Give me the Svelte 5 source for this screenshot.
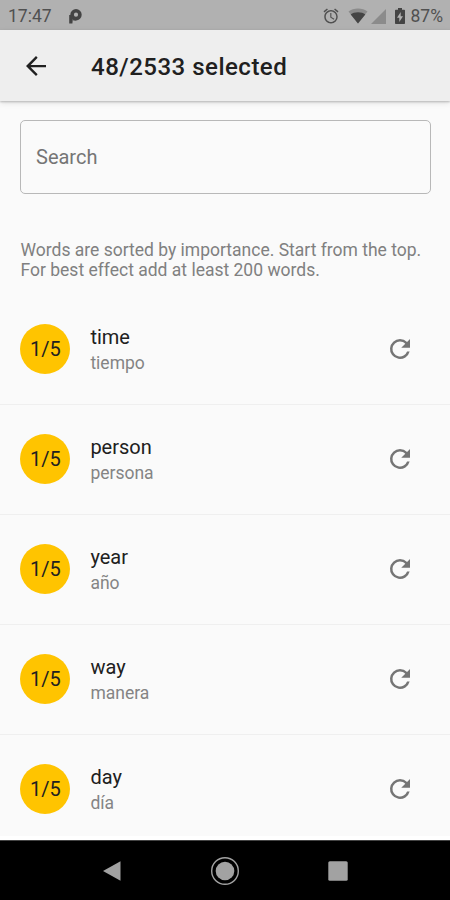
<script>
    const words = [
        { word: "time", translation: "tiempo" },
        { word: "person", translation: "persona" },
        { word: "year", translation: "año" },
        { word: "way", translation: "manera" },
        { word: "day", translation: "día" },
    ];

    let search = $state("");
</script>

<div class="screen">
    <div class="status-bar">
        <span class="clock">17:47</span>
        <svg class="parking" viewBox="0 0 13 15">
            <circle cx="7" cy="5.700" r="3.900" fill="none" stroke="currentColor" stroke-width="3.600" />
            <path d="M.2 6h3.600v4.200l-.4 4.400H.2zM4.200 8h3v3.500h-3z" />
        </svg>
        <div class="status-icons">
            <svg class="alarm" viewBox="0 0 24 24">
                <path
                    d="M22 5.720l-4.600-3.860-1.290 1.530 4.600 3.860L22 5.720zM7.880 3.390L6.600 1.860 2 5.710l1.290 1.530 4.590-3.850zM12.500 8H11v6l4.750 2.850.75-1.230-4-2.370V8zM12 4c-4.970 0-9 4.030-9 9s4.020 9 9 9a9 9 0 0 0 0-18zm0 16c-3.870 0-7-3.130-7-7s3.130-7 7-7 7 3.130 7 7-3.130 7-7 7z"
                />
            </svg>
            <svg class="wifi" viewBox="0 0 20 16">
                <path opacity="0.35" d="M10 15.500L.5 3.600C3 1.700 6.300.6 10 .6s7 1.100 9.500 3z" />
                <path d="M10 15.500L2.700 6.400C4.500 5 7 4.200 10 4.200s5.500.8 7.300 2.200z" />
            </svg>
            <svg class="signal" viewBox="0 0 15 15">
                <path d="M15 0v15H0z" />
            </svg>
            <svg class="battery" viewBox="0 0 10 16">
                <path
                    fill-rule="evenodd"
                    d="M3 0h4v1.700h2.200q.8 0 .8.800v12.700q0 .8-.8.800H.8q-.8 0-.8-.8V2.500q0-.8.8-.8H3zM5.700 4L2 9.700h2.300V14L8 8.200H5.700z"
                />
            </svg>
            <span>87%</span>
        </div>
    </div>

    <header>
        <button class="back" aria-label="Back">
            <svg viewBox="0 0 24 24">
                <path d="M20 11.100H7.730l5.590-5.690L12 4l-8 8 8 8 1.320-1.410-5.590-5.690H20v-1.800z" />
            </svg>
        </button>
        <h1>48/2533 selected</h1>
    </header>

    <main>
        <input type="text" placeholder="Search" bind:value={search} />
        <p class="hint">
            Words are sorted by importance. Start from the top.<br />
            For best effect add at least 200 words.
        </p>

        <ul>
            {#each words as item}
                <li>
                    <div class="level">1/5</div>
                    <div class="labels">
                        <span class="word">{item.word}</span>
                        <span class="translation">{item.translation}</span>
                    </div>
                    <button class="reset" aria-label="Reset {item.word}">
                        <svg viewBox="0 0 24 24">
                            <path
                                d="M17.650 6.350A7.958 7.958 0 0 0 12 4a8 8 0 1 0 7.730 10h-2.080A6 6 0 1 1 12 6c1.660 0 3.140.69 4.220 1.780L13 11h7V4l-2.350 2.350z"
                            />
                        </svg>
                    </button>
                </li>
            {/each}
        </ul>
    </main>

    <nav>
        <svg viewBox="0 0 30 30">
            <path d="M6 15L23.500 5.200v19.600z" />
        </svg>
        <svg viewBox="0 0 30 30">
            <circle cx="15" cy="15" r="13.300" fill="none" stroke="#a2a2a2" stroke-width="1.400" />
            <circle cx="15" cy="15" r="9.300" />
        </svg>
        <svg viewBox="0 0 30 30">
            <rect x="5.300" y="5.300" width="19.400" height="19.400" rx="1.500" />
        </svg>
    </nav>
</div>

<style>
    .screen {
        display: flex;
        flex-direction: column;
        width: 450px;
        height: 900px;
        overflow: hidden;
        background: #fafafa;
        font-family: Roboto, sans-serif;
        color: #202020;
    }

    svg {
        display: block;
        flex: none;
        fill: currentColor;
    }

    button {
        padding: 0;
        border: none;
        background: none;
        color: inherit;
    }

    .status-bar {
        display: flex;
        align-items: center;
        flex: none;
        height: 30px;
        padding: 2px 7px 0 8px;
        box-sizing: border-box;
        background: #b1b1b1;
        color: #505050;
        font-size: 17.5px;
    }

    .clock {
        width: 60.5px;
    }

    .parking {
        width: 13px;
        height: 15px;
        color: #444444;
    }

    .status-icons {
        display: flex;
        align-items: center;
        margin-left: auto;
    }

    .alarm {
        width: 18px;
        height: 18px;
        margin-right: 8px;
    }

    .wifi {
        width: 20px;
        height: 16px;
        margin-right: 3px;
        color: #444444;
    }

    .signal {
        width: 15px;
        height: 15px;
        margin-right: 9px;
        color: #8b8b8b;
    }

    .battery {
        width: 10px;
        height: 16px;
        margin-right: 6px;
        color: #444444;
    }

    header {
        display: flex;
        align-items: center;
        flex: none;
        height: 71px;
        padding-left: 20.5px;
        box-sizing: border-box;
        background: #eeeeee;
        box-shadow:
            0 1px 2px rgba(0, 0, 0, 0.22),
            0 2px 6px rgba(0, 0, 0, 0.1);
    }

    .back svg {
        width: 30px;
        height: 30px;
    }

    h1 {
        margin: 2px 0 0 40.5px;
        font-size: 24px;
        font-weight: 500;
        letter-spacing: 0.5px;
    }

    main {
        flex: 1;
        min-height: 0;
        box-shadow: inset 0 -4px 0 #ffffff;
    }

    input {
        display: block;
        width: 411px;
        height: 74px;
        margin: 19px 0 0 20px;
        padding: 0 15px;
        box-sizing: border-box;
        border: 1.5px solid #b8b8b8;
        border-radius: 5px;
        background: none;
        font: 20px Roboto, sans-serif;
        outline: none;
    }

    input::placeholder {
        color: #757575;
        opacity: 1;
    }

    .hint {
        margin: 45.5px 0 0 20.5px;
        color: #808080;
        font-size: 17.5px;
        line-height: 20px;
        white-space: nowrap;
    }

    ul {
        margin: 15px 0 0;
        padding: 0;
        list-style: none;
    }

    li {
        display: flex;
        align-items: center;
        height: 110px;
        padding: 0 35px 0 20.4px;
        box-sizing: border-box;
        border-bottom: 1px solid #efefef;
    }

    .level {
        display: flex;
        align-items: center;
        justify-content: center;
        width: 50px;
        height: 50px;
        border-radius: 50%;
        background: #ffc400;
        font-size: 20px;
    }

    .labels {
        display: flex;
        flex: 1;
        flex-direction: column;
        margin-left: 20px;
    }

    .word {
        font-size: 20px;
        line-height: 28px;
    }

    .translation {
        color: #848484;
        font-size: 17.5px;
        line-height: 24px;
    }

    .reset {
        color: #757575;
    }

    .reset svg {
        width: 30px;
        height: 30px;
    }

    nav {
        display: flex;
        align-items: center;
        justify-content: space-between;
        flex: none;
        height: 60px;
        padding: 0 97px;
        box-sizing: border-box;
        border-top: 1px solid #444444;
        background: #000000;
        color: #a2a2a2;
    }

    nav svg {
        width: 30px;
        height: 30px;
    }
</style>
